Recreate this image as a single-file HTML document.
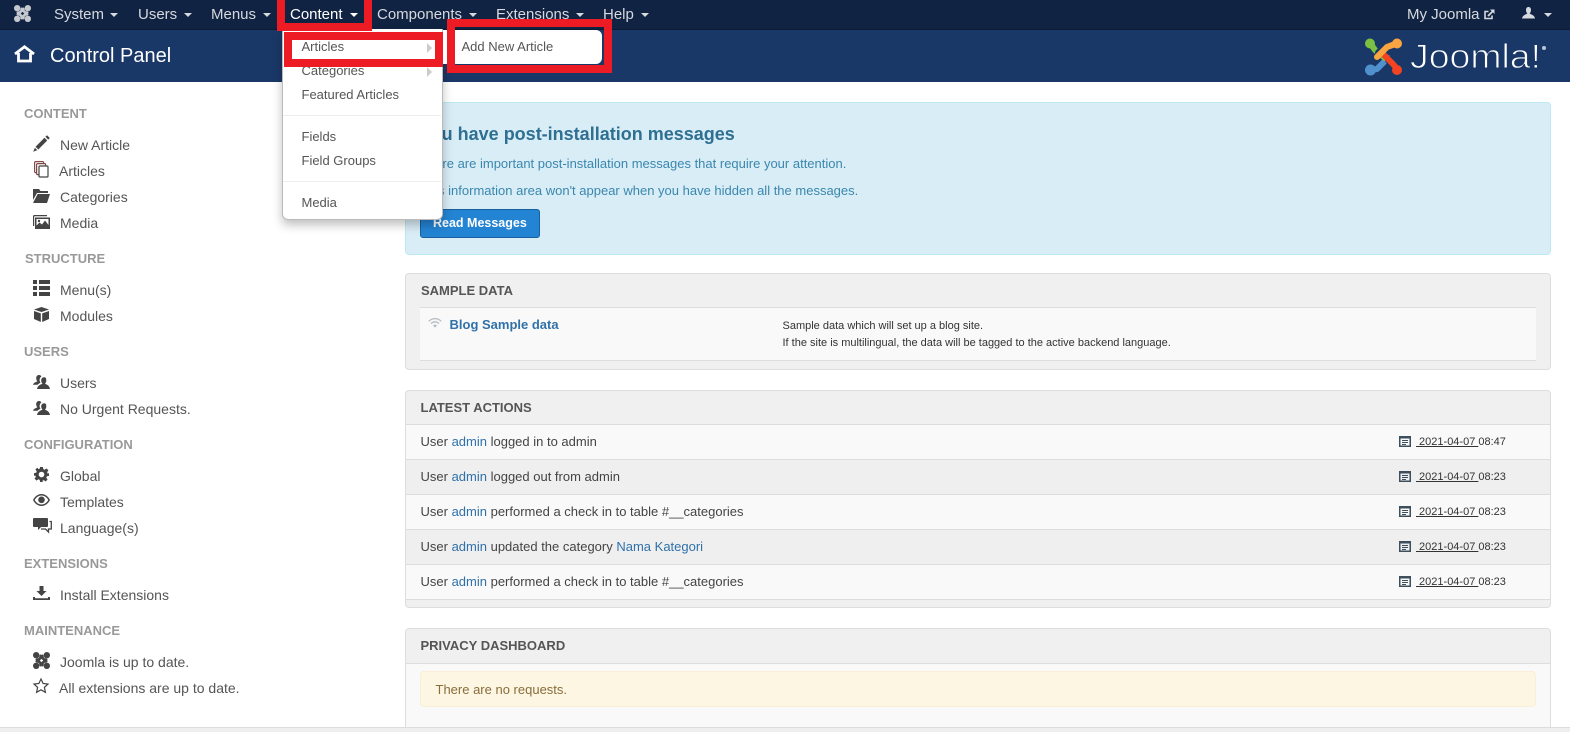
<!DOCTYPE html>
<html><head><meta charset="utf-8"><title>Control Panel</title>
<style>
html,body{margin:0;padding:0;width:1570px;height:732px;overflow:hidden;background:#fff}
body{position:relative;font-family:"Liberation Sans",Arial,sans-serif;font-size:14px;color:#555}
.a{position:absolute}
.t{position:absolute;line-height:20px;height:20px;white-space:pre}
.n{color:#d6d9de;font-size:15px}
.c{position:absolute;top:13px;width:0;height:0;border-left:4px solid transparent;border-right:4px solid transparent;border-top:4px solid #d6d9de}
.h{font-size:13px;font-weight:bold;color:#999}
.s{font-size:14px;color:#555}
.m{font-size:13px;color:#555}
.p{position:absolute;left:405px;width:1144px;background:#f0f0f0;border:1px solid #ddd;border-radius:4px;box-sizing:content-box}
.ph{font-size:13px;font-weight:bold;color:#555}
.l{color:#3071a9}
.d{font-size:11px;color:#333}
.d u{text-decoration:underline}
svg{position:absolute;overflow:visible}
.box{position:absolute;border:8px solid #ed1c24;box-sizing:border-box}
</style></head><body>
<svg width="0" height="0" style="position:absolute"><defs>
<symbol id="jm" viewBox="0 0 16 16"><g fill="none" stroke="currentColor" stroke-width="2.600"><path d="M3 6.400L9.600 13M6.400 3L13 9.600M13 6.400L6.400 13M9.600 3L3 9.600"/></g><circle cx="3" cy="3" r="3" fill="currentColor"/><circle cx="13" cy="3" r="3" fill="currentColor"/><circle cx="3" cy="13" r="3" fill="currentColor"/><circle cx="13" cy="13" r="3" fill="currentColor"/></symbol>
<symbol id="us" viewBox="0 0 17 14"><path fill="#444" d="M6 0C4.300 0 3.200 1.300 3.200 3.200c0 1.300.5 2.400 1.200 3C3.300 7 .5 7.500 0 9.800h4.600C5.300 8.800 6.500 8.300 7.500 7.800 6.900 6.900 6.600 6 6.600 5c0-1.500.6-2.800 1.800-3.500C8 .6 7.200 0 6 0z"/><path fill="#444" d="M11.200 2.200C9.300 2.200 8.200 3.600 8.200 5.400c0 1.300.5 2.500 1.300 3.200C8.200 9.500 4.700 10 4 14h13c-.6-4-3.900-4.500-5-5.400.8-.7 1.300-1.900 1.300-3.200 0-1.800-.3-3.200-2.100-3.200z"/></symbol>
<symbol id="cal" viewBox="0 0 12 12"><path fill="#3d4f5c" d="M0 1h12v11H0zM1.500 3.500v7h9v-7z"/><path fill="#3d4f5c" d="M3 5h6v1H3zM3 7h6v1H3zM3 9h4v1H3z"/></symbol>
</defs></svg>

<!-- top navbar -->
<div class="a" style="left:0;top:0;width:1570px;height:29px;background:#112342;border-bottom:1px solid #0c1a33"></div>
<svg style="left:14px;top:5px;color:#c4c8cf" width="17" height="17"><use href="#jm" width="17" height="17"/></svg>
<div class="t n" style="left:54px;top:5px">System</div><div class="c" style="left:110px"></div>
<div class="t n" style="left:138px;top:5px">Users</div><div class="c" style="left:184px"></div>
<div class="t n" style="left:211px;top:5px">Menus</div><div class="c" style="left:263px"></div>
<div class="t n" style="left:290px;top:5px;color:#fff">Content</div><div class="c" style="left:350px;border-top-color:#fff"></div>
<div class="t n" style="left:377px;top:5px">Components</div><div class="c" style="left:469px"></div>
<div class="t n" style="left:496px;top:5px">Extensions</div><div class="c" style="left:576px"></div>
<div class="t n" style="left:603px;top:5px">Help</div><div class="c" style="left:641px"></div>
<div class="t n" style="left:1407px;top:5px">My Joomla</div>
<svg style="left:1484px;top:9px" width="11" height="11" viewBox="0 0 11 11"><path fill="none" stroke="#d6d9de" stroke-width="1.600" d="M8 6.500V9.500H1V2.500H4.500"/><path fill="none" stroke="#d6d9de" stroke-width="1.800" d="M4 7L9 2"/><path fill="#d6d9de" d="M6 0.500H10.500V5z"/></svg>
<svg style="left:1522px;top:7px" width="13" height="12" viewBox="0 0 13 12"><path fill="#d6d9de" d="M6.500 0C4.800 0 4 1.300 4 3c0 1.500.6 2.800 1.400 3.500C4 7.500.5 8 0 11.500h13c-.5-3.500-4-4-5.400-5 .8-.7 1.400-2 1.400-3.500C9 1.300 8.200 0 6.500 0z"/></svg>
<div class="c" style="left:1544px"></div>

<!-- header -->
<div class="a" style="left:0;top:30px;width:1570px;height:52px;background:#1a3867"></div>
<svg style="left:14px;top:45px" width="21" height="18" viewBox="0 0 21 18"><path fill="none" stroke="#fff" stroke-width="2.800" d="M1 9L10.500 1.800L20 9"/><path fill="none" stroke="#fff" stroke-width="2.800" d="M4.500 8V16H16.500V8"/></svg>
<div class="t" style="left:50px;top:46px;font-size:20px;color:#fff">Control Panel</div>
<svg style="left:1365px;top:38px" width="37" height="37" viewBox="0 0 37 37">
<g fill="none" stroke-linecap="round" stroke-linejoin="round" stroke-width="6">
<path stroke="#5091cd" d="M5 32L12 31L23 20"/>
<path stroke="#7ac143" d="M5 5L10 12L20 20"/>
<path stroke="#1a3867" stroke-width="8" d="M24 22L28 26"/>
<path stroke="#f44321" d="M33 32L28 26L18 16"/>
<path stroke="#1a3867" stroke-width="8" d="M14 15L19 10"/>
<path stroke="#f9a541" d="M33 5L22 9L12 19"/>
</g>
<circle cx="5" cy="5.500" r="5" fill="#7ac143"/><circle cx="32" cy="5.500" r="5" fill="#f9a541"/><circle cx="5.500" cy="32" r="5.500" fill="#5091cd"/><circle cx="32" cy="32" r="5" fill="#f44321"/></svg>
<svg style="left:1405px;top:40px" width="145" height="32"><text x="5" y="28" font-family="Liberation Sans" font-size="34" fill="#fff" stroke="#1a3867" stroke-width="1" textLength="131" lengthAdjust="spacingAndGlyphs">Joomla!</text><circle cx="139" cy="8" r="2" fill="#b9c4d6"/></svg>

<!-- sidebar -->
<div class="t h" style="left:24px;top:104px">CONTENT</div>
<svg style="left:33px;top:135px" width="17" height="17" viewBox="0 0 16 16"><path fill="#444" d="M13.200.2L15.800 2.800 14.300 4.300 11.700 1.700zM10.800 2.600L13.400 5.200 5 13.600 2.400 11zM1.800 12L4 14.200 .2 15.800z"/></svg>
<div class="t s" style="left:60px;top:135px">New Article</div>
<svg style="left:34px;top:161px" width="15" height="17" viewBox="0 0 15 17"><g fill="#fff" stroke-width="1.200"><rect x=".6" y=".6" width="9" height="11" rx="1" stroke="#8a4a48"/><rect x="2.600" y="2.600" width="9" height="11" rx="1" stroke="#7a4a48"/><rect x="5" y="5" width="9" height="11" rx="1" stroke="#444"/></g></svg>
<div class="t s" style="left:59px;top:161px">Articles</div>
<svg style="left:33px;top:189px" width="17" height="14" viewBox="0 0 17 14"><path fill="#444" d="M0 0h6l1.500 2H15v2H4L0 11z"/><path fill="#444" d="M4.600 5H17l-3 9H0z"/></svg>
<div class="t s" style="left:60px;top:187px">Categories</div>
<svg style="left:33px;top:215px" width="17" height="14" viewBox="0 0 17 14"><path fill="none" stroke="#444" stroke-width="1.200" d="M.6.600H14M.6.600V11"/><path fill="#444" d="M2 2.500h15V14H2zM3.500 4v6.500l3-3 2.500 2 3-4 3.500 4.500V4z"/><circle cx="6" cy="6" r="1.200" fill="#444"/></svg>
<div class="t s" style="left:60px;top:213px">Media</div>

<div class="t h" style="left:25px;top:249px">STRUCTURE</div>
<svg style="left:33px;top:280px" width="17" height="16" viewBox="0 0 17 16"><path fill="#444" d="M0 0h4v4H0zM6 0h11v4H6zM0 6h4v4H0zM6 6h11v4H6zM0 12h4v4H0zM6 12h11v4H6z"/></svg>
<div class="t s" style="left:60px;top:280px">Menu(s)</div>
<svg style="left:34px;top:307px" width="15" height="15" viewBox="0 0 15 15"><path fill="#444" d="M7.500 0L15 2.500 7.500 5 0 2.500zM0 4l6.800 2.400V15L0 12zM15 4L8.200 6.400V15L15 12z"/></svg>
<div class="t s" style="left:60px;top:306px">Modules</div>

<div class="t h" style="left:24px;top:342px">USERS</div>
<svg style="left:33px;top:375px" width="17" height="14"><use href="#us" width="17" height="14"/></svg>
<div class="t s" style="left:60px;top:373px">Users</div>
<svg style="left:33px;top:401px" width="17" height="14"><use href="#us" width="17" height="14"/></svg>
<div class="t s" style="left:60px;top:399px">No Urgent Requests.</div>

<div class="t h" style="left:24px;top:435px">CONFIGURATION</div>
<svg style="left:34px;top:467px" width="15" height="15" viewBox="0 0 16 16"><path fill="#444" fill-rule="evenodd" d="M6.500 0h3l.4 2.300 1.500.6L13.300 1.500l2.100 2.100-1.400 1.900.6 1.500L16 6.500v3l-2.300.4-.6 1.500 1.400 1.900-2.100 2.100-1.900-1.400-1.500.6L9.500 16h-3l-.4-2.300-1.500-.6-1.900 1.400-2.100-2.100 1.400-1.900-.6-1.500L0 9.500v-3l2.300-.4.6-1.500L1.500 2.700 3.600.6l1 1.700 1.500-.6zM8 5a3 3 0 100 6 3 3 0 000-6z"/></svg>
<div class="t s" style="left:60px;top:466px">Global</div>
<svg style="left:33px;top:494px" width="17" height="12" viewBox="0 0 17 12"><path fill="#444" fill-rule="evenodd" d="M8.500 0C4.500 0 1.500 3 0 6c1.500 3 4.500 6 8.500 6S15.500 9 17 6C15.500 3 12.500 0 8.500 0zM8.500 1.500C11.500 1.500 14 3.500 15.300 6 14 8.500 11.500 10.500 8.500 10.500S3 8.500 1.700 6C3 3.500 5.500 1.500 8.500 1.500z"/><circle cx="8.500" cy="5.800" r="3.300" fill="#444"/></svg>
<div class="t s" style="left:60px;top:492px">Templates</div>
<svg style="left:33px;top:518px" width="19" height="16" viewBox="0 0 19 16"><path fill="#444" d="M1 0h13a1 1 0 011 1v7a1 1 0 01-1 1H8l-3 3V9H1a1 1 0 01-1-1V1a1 1 0 011-1z"/><path fill="none" stroke="#444" stroke-width="1.300" d="M16.500 3.500h1.800v7.500h-2.800v3l-3-3H8"/></svg>
<div class="t s" style="left:60px;top:518px">Language(s)</div>

<div class="t h" style="left:24px;top:554px">EXTENSIONS</div>
<svg style="left:33px;top:586px" width="17" height="14" viewBox="0 0 17 14"><path fill="#444" d="M6.500 0h4v5h3L8.500 10 3.500 5h3zM0 11h2v1.200h13V11h2v3H0z"/></svg>
<div class="t s" style="left:60px;top:585px">Install Extensions</div>

<div class="t h" style="left:24px;top:621px">MAINTENANCE</div>
<svg style="left:33px;top:652px;color:#444" width="17" height="17"><use href="#jm" width="17" height="17"/></svg>
<div class="t s" style="left:60px;top:652px">Joomla is up to date.</div>
<svg style="left:33px;top:678px" width="16" height="15" viewBox="0 0 16 15"><path fill="none" stroke="#444" stroke-width="1.200" d="M8 1l2.100 4.500 4.900.6-3.600 3.300 1 4.900L8 11.800 3.600 14.300l1-4.900L1 6.100l4.900-.6z"/></svg>
<div class="t s" style="left:59px;top:678px">All extensions are up to date.</div>

<!-- info alert -->
<div class="a" style="left:405px;top:102px;width:1144px;height:151px;background:#d9edf7;border:1px solid #bce8f1;border-radius:4px"></div>
<div class="t" style="left:420px;top:124px;font-size:18px;font-weight:bold;color:#2f6f92">You have post-installation messages</div>
<div class="t" style="left:420px;top:154px;font-size:13px;color:#3a87ad">There are important post-installation messages that require your attention.</div>
<div class="t" style="left:420px;top:181px;font-size:13px;color:#3a87ad">This information area won't appear when you have hidden all the messages.</div>
<div class="a" style="left:420px;top:209px;width:118px;height:27px;background:#2384d3;border:1px solid #1a5f9e;border-radius:3px"></div>
<div class="t" style="left:433px;top:213px;font-size:12.500px;font-weight:bold;color:#fff;">Read Messages</div>

<!-- sample data -->
<div class="p" style="top:273px;height:95px"></div>
<div class="t ph" style="left:421px;top:281px">SAMPLE DATA</div>
<div class="a" style="left:420px;top:307px;width:1116px;height:52px;background:#f9f9f9;border-top:1px solid #ddd;border-bottom:1px solid #ddd"></div>
<svg style="left:428px;top:318px" width="14" height="10" viewBox="0 0 14 10"><g fill="none" stroke="#b5bbc2" stroke-width="1.300"><path d="M.7 3.300C4.500-.3 9.500-.3 13.300 3.300"/><path d="M2.900 5.500C5.500 3.300 8.500 3.300 11.100 5.500"/></g><path d="M5 7.300L7 9.700 9 7.300C8 6.400 6 6.400 5 7.300z" fill="#b5bbc2"/></svg>
<div class="t" style="left:449.500px;top:315px;font-size:13px;font-weight:bold;color:#3071a9">Blog Sample data</div>
<div class="t" style="left:782.500px;top:316px;font-size:11px;color:#333">Sample data which will set up a blog site.</div>
<div class="t" style="left:782.500px;top:333px;font-size:11px;color:#333">If the site is multilingual, the data will be tagged to the active backend language.</div>

<!-- latest actions -->
<div class="p" style="top:390px;height:216px"></div>
<div class="t ph" style="left:420.500px;top:398px">LATEST ACTIONS</div>
<div class="a" style="left:406px;top:424px;width:1144px;height:34px;background:#f9f9f9;border-top:1px solid #ddd;border-bottom:1px solid #ddd"></div>
<div class="a" style="left:406px;top:460px;width:1144px;height:34px;background:#efefef;border-bottom:1px solid #ddd"></div>
<div class="a" style="left:406px;top:495px;width:1144px;height:34px;background:#f9f9f9;border-bottom:1px solid #ddd"></div>
<div class="a" style="left:406px;top:530px;width:1144px;height:34px;background:#efefef;border-bottom:1px solid #ddd"></div>
<div class="a" style="left:406px;top:565px;width:1144px;height:34px;background:#f9f9f9;border-bottom:1px solid #ddd"></div>
<div class="t m" style="left:420.500px;top:432px;color:#444">User <span class="l">admin</span> logged in to admin</div>
<div class="t m" style="left:420.500px;top:467px;color:#444">User <span class="l">admin</span> logged out from admin</div>
<div class="t m" style="left:420.500px;top:502px;color:#444">User <span class="l">admin</span> performed a check in to table #__categories</div>
<div class="t m" style="left:420.500px;top:537px;color:#444">User <span class="l">admin</span> updated the category <span class="l">Nama Kategori</span></div>
<div class="t m" style="left:420.500px;top:572px;color:#444">User <span class="l">admin</span> performed a check in to table #__categories</div>
<svg style="left:1399px;top:435px" width="12" height="12"><use href="#cal" width="12" height="12"/></svg>
<svg style="left:1399px;top:470px" width="12" height="12"><use href="#cal" width="12" height="12"/></svg>
<svg style="left:1399px;top:505px" width="12" height="12"><use href="#cal" width="12" height="12"/></svg>
<svg style="left:1399px;top:540px" width="12" height="12"><use href="#cal" width="12" height="12"/></svg>
<svg style="left:1399px;top:575px" width="12" height="12"><use href="#cal" width="12" height="12"/></svg>
<div class="t d" style="left:1416px;top:432px"><u> 2021-04-07 </u>08:47</div>
<div class="t d" style="left:1416px;top:467px"><u> 2021-04-07 </u>08:23</div>
<div class="t d" style="left:1416px;top:502px"><u> 2021-04-07 </u>08:23</div>
<div class="t d" style="left:1416px;top:537px"><u> 2021-04-07 </u>08:23</div>
<div class="t d" style="left:1416px;top:572px"><u> 2021-04-07 </u>08:23</div>

<!-- privacy -->
<div class="a" style="left:405px;top:628px;width:1144px;height:120px;background:#f9f9f9;border:1px solid #ddd;border-radius:4px"></div>
<div class="a" style="left:406px;top:629px;width:1144px;height:34px;background:#f0f0f0;border-bottom:1px solid #ddd;border-radius:3px 3px 0 0"></div>
<div class="t ph" style="left:420.500px;top:636px">PRIVACY DASHBOARD</div>
<div class="a" style="left:420px;top:671px;width:1114px;height:34px;background:#fcf6e3;border:1px solid #fbeed5;border-radius:4px"></div>
<div class="t" style="left:435.500px;top:680px;font-size:13px;color:#8a6d3b">There are no requests.</div>

<!-- bottom bar -->
<div class="a" style="left:0;top:727px;width:1570px;height:5px;background:#eee;border-top:1px solid #ddd;box-sizing:border-box"></div>

<!-- dropdown -->
<div class="a" style="left:282px;top:29px;width:159px;height:190px;background:#fff;border:1px solid #bbb;border-top:0;border-radius:0 0 6px 6px;box-shadow:0 5px 10px rgba(0,0,0,.25)"></div>
<div class="t m" style="left:301.500px;top:37px">Articles</div>
<div class="a" style="left:427px;top:43px;border-left:5px solid #ccc;border-top:5px solid transparent;border-bottom:5px solid transparent"></div>
<div class="t m" style="left:301.500px;top:61px">Categories</div>
<div class="a" style="left:427px;top:67px;border-left:5px solid #ccc;border-top:5px solid transparent;border-bottom:5px solid transparent"></div>
<div class="t m" style="left:301.500px;top:85px">Featured Articles</div>
<div class="a" style="left:283px;top:115px;width:158px;height:1px;background:#eee"></div>
<div class="t m" style="left:301.500px;top:127px">Fields</div>
<div class="t m" style="left:301.500px;top:151px">Field Groups</div>
<div class="a" style="left:283px;top:181px;width:158px;height:1px;background:#eee"></div>
<div class="t m" style="left:301.500px;top:193px">Media</div>

<!-- submenu -->
<div class="a" style="left:443px;top:30px;width:159px;height:34px;background:#fff;border-radius:0 6px 6px 0;"></div>
<div class="t m" style="left:461.500px;top:37px">Add New Article</div>

<!-- red annotation boxes -->
<div class="box" style="left:277px;top:0;width:95px;height:31px;border-top:0"></div>
<div class="box" style="left:284px;top:32px;width:159px;height:35px;"></div>
<div class="box" style="left:447px;top:19px;width:165px;height:54px;"></div>
</body></html>
